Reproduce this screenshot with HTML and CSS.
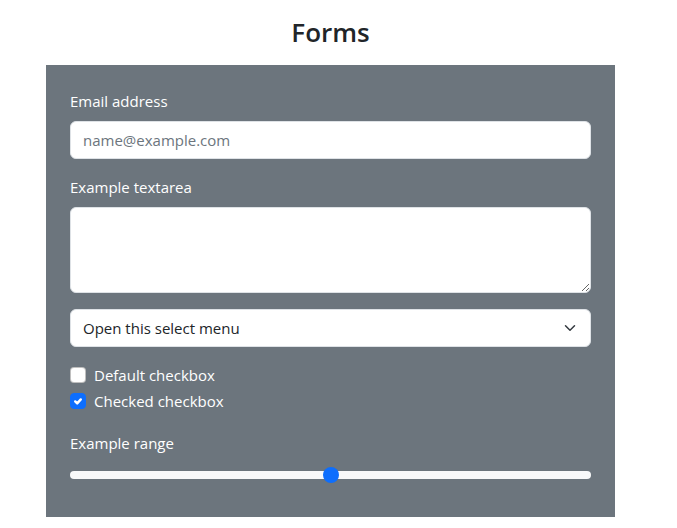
FILE: index.html
```html
<!DOCTYPE html>
<html lang="en">
<head>
<meta charset="utf-8">
<title>Forms</title>
<link rel="stylesheet" href="styles.css">
</head>
<body>
<div class="page">
  <h2 class="title">Forms</h2>
  <form class="panel">
    <div class="field">
      <label class="label" for="email">Email address</label>
      <input class="control" id="email" type="email" placeholder="name@example.com">
    </div>
    <div class="field">
      <label class="label" for="ta">Example textarea</label>
      <textarea class="control area" id="ta" rows="3"></textarea>
    </div>
    <div class="field">
      <div class="control select">
        <span>Open this select menu</span>
        <svg class="chev" width="16" height="12" viewBox="0 0 16 16"><path fill="none" stroke="#343a40" stroke-linecap="round" stroke-linejoin="round" stroke-width="2" d="M2 5l6 6 6-6"/></svg>
      </div>
    </div>
    <div class="check">
      <span class="box"></span>
      <span class="check-label">Default checkbox</span>
    </div>
    <div class="check last">
      <span class="box on">
        <svg width="16" height="16" viewBox="0 0 20 20"><path fill="none" stroke="#fff" stroke-linecap="round" stroke-linejoin="round" stroke-width="3" d="M6.5 10.5l2.5 2.5l4.5-5"/></svg>
      </span>
      <span class="check-label">Checked checkbox</span>
    </div>
    <div class="field range-field">
      <label class="label">Example range</label>
      <div class="range">
        <div class="track"></div>
        <div class="thumb"></div>
      </div>
    </div>
  </form>
</div>
</body>
</html>
```
FILE: styles.css
```css
* { box-sizing: border-box; }
body {
  margin: 0;
  background: #fff;
  font-family: "Open Sans", "Noto Sans", sans-serif;
  font-size: 15px;
  line-height: 24px;
  color: #212529;
}
.page {
  width: 569px;
  margin-left: 46px;
  padding-top: 16px;
}
.title {
  margin: 0 0 16px;
  text-align: center;
  font-size: 26px;
  font-weight: 600;
  line-height: 33px;
  color: #212529;
}
.panel {
  display: block;
  margin: 0;
  background: #6c757d;
  padding: 24px 24px 30px;
}
.field { margin-bottom: 16px; }
.label {
  display: block;
  color: #fff;
  margin-bottom: 8px;
  line-height: 24px;
}
.control {
  display: block;
  width: 100%;
  height: 38px;
  padding: 6px 12px;
  font: inherit;
  line-height: 24px;
  color: #212529;
  background: #fff;
  border: 1px solid #dee2e6;
  border-radius: 6px;
  outline: none;
}
.control::placeholder { color: #6c757d; opacity: 1; }
.area {
  height: 86px;
  resize: vertical;
}
.select {
  display: flex;
  align-items: center;
  justify-content: space-between;
  padding-right: 12px;
}
.chev { display: block; }
.check {
  display: flex;
  align-items: center;
  gap: 8px;
  height: 24px;
  margin-bottom: 2px;
  color: #fff;
}
.check.last { margin-bottom: 18px; }
.box {
  width: 16px;
  height: 16px;
  border-radius: 4px;
  background: #fff;
  border: 1px solid rgba(0,0,0,.25);
  display: flex;
  align-items: center;
  justify-content: center;
}
.box.on {
  background: #0d6efd;
  border-color: #0d6efd;
}
.box svg { display: block; flex: none; }
.range-field { margin-bottom: 0; }
.range {
  position: relative;
  height: 24px;
  display: flex;
  align-items: center;
}
.track {
  width: 100%;
  height: 8px;
  border-radius: 4px;
  background: #f8f9fa;
}
.thumb {
  position: absolute;
  left: calc(50% - 8px);
  top: 4px;
  width: 16px;
  height: 16px;
  border-radius: 50%;
  background: #0d6efd;
}
```
